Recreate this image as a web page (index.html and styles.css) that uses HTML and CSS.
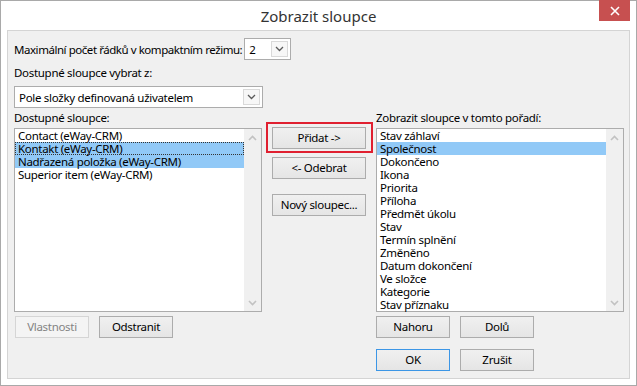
FILE: index.html
```html
<!DOCTYPE html>
<html lang="cs">
<head>
<meta charset="utf-8">
<title>Zobrazit sloupce</title>
<link rel="stylesheet" href="styles.css">
</head>
<body>
<div class="window">
  <div class="titlebar">
    <span class="title-spacer"></span>
    <div class="title">Zobrazit sloupce</div>
    <div class="close" aria-label="Zavřít">
      <svg width="10" height="10" viewBox="0 0 10 10"><path d="M1 1 L9 9 M9 1 L1 9" stroke="#fff" stroke-width="1.6" fill="none"/></svg>
    </div>
  </div>
  <div class="client">
    <div class="row-max">
      <span class="label label-max">Maximální počet řádků v kompaktním režimu:</span>
      <div class="combo combo-small">
        <span class="combo-value">2</span>
        <span class="combo-btn"><svg width="9" height="6" viewBox="0 0 9 6"><path d="M1 1 L4.5 4.5 L8 1" stroke="#5a5a5a" stroke-width="1.3" fill="none"/></svg></span>
      </div>
    </div>
    <div class="label label-source">Dostupné sloupce vybrat z:</div>
    <div class="combo combo-wide">
      <span class="combo-value">Pole složky definovaná uživatelem</span>
      <span class="combo-btn"><svg width="9" height="6" viewBox="0 0 9 6"><path d="M1 1 L4.5 4.5 L8 1" stroke="#5a5a5a" stroke-width="1.3" fill="none"/></svg></span>
    </div>
    <div class="columns">
      <div class="col col-left">
        <div class="label col-label">Dostupné sloupce:</div>
        <div class="listbox">
          <ul class="items">
            <li>Contact (eWay-CRM)</li>
            <li class="selected focused">Kontakt (eWay-CRM)</li>
            <li class="selected">Nadřazená položka (eWay-CRM)</li>
            <li>Superior item (eWay-CRM)</li>
          </ul>
          <div class="scrollbar">
            <svg width="9" height="6" viewBox="0 0 9 6"><path d="M1 5 L4.5 1.5 L8 5" stroke="#c2c2c2" stroke-width="1.6" fill="none"/></svg>
            <svg width="9" height="6" viewBox="0 0 9 6"><path d="M1 1 L4.5 4.5 L8 1" stroke="#c2c2c2" stroke-width="1.6" fill="none"/></svg>
          </div>
        </div>
        <div class="btn-row">
          <button class="btn" disabled>Vlastnosti</button>
          <button class="btn">Odstranit</button>
        </div>
      </div>
      <div class="col col-mid">
        <div class="mark-frame"><button class="btn btn-wide">Přidat -&gt;</button></div>
        <button class="btn btn-wide btn-remove">&lt;- Odebrat</button>
        <button class="btn btn-wide btn-new">Nový sloupec...</button>
      </div>
      <div class="col col-right">
        <div class="label col-label">Zobrazit sloupce v tomto pořadí:</div>
        <div class="listbox">
          <ul class="items">
            <li>Stav záhlaví</li>
            <li class="selected">Společnost</li>
            <li>Dokončeno</li>
            <li>Ikona</li>
            <li>Priorita</li>
            <li>Příloha</li>
            <li>Předmět úkolu</li>
            <li>Stav</li>
            <li>Termín splnění</li>
            <li>Změněno</li>
            <li>Datum dokončení</li>
            <li>Ve složce</li>
            <li>Kategorie</li>
            <li>Stav příznaku</li>
          </ul>
          <div class="scrollbar">
            <svg width="9" height="6" viewBox="0 0 9 6"><path d="M1 5 L4.5 1.5 L8 5" stroke="#c2c2c2" stroke-width="1.6" fill="none"/></svg>
            <svg width="9" height="6" viewBox="0 0 9 6"><path d="M1 1 L4.5 4.5 L8 1" stroke="#c2c2c2" stroke-width="1.6" fill="none"/></svg>
          </div>
        </div>
        <div class="btn-row">
          <button class="btn">Nahoru</button>
          <button class="btn">Dolů</button>
        </div>
        <div class="btn-row btn-row-ok">
          <button class="btn btn-default">OK</button>
          <button class="btn">Zrušit</button>
        </div>
      </div>
    </div>
  </div>
</div>
</body>
</html>
```

FILE: styles.css
```css
* {
  box-sizing: border-box;
}

html, body {
  margin: 0;
  padding: 0;
  background: #fff;
}

body {
  font-family: "Noto Sans", "Open Sans", sans-serif;
  font-size: 11.5px;
  letter-spacing: -0.3px;
  color: #000;
}

.window {
  width: 637px;
  height: 386px;
  border: 1px solid #a9a9a9;
  background: #fff;
  display: flex;
  flex-direction: column;
}

.titlebar {
  height: 29px;
  display: grid;
  grid-template-columns: 1fr auto 1fr;
  align-items: start;
}

.title {
  font-size: 15px;
  letter-spacing: 0;
  line-height: 29px;
  color: #333;
  padding-top: 1px;
}

.close {
  justify-self: end;
  margin-right: 6px;
  margin-top: -1px;
  width: 31px;
  height: 21px;
  background: #c75050;
  display: flex;
  align-items: center;
  justify-content: center;
}

.client {
  flex: 1;
  margin: 0 6px 6px 6px;
  border: 1px solid #d4d4d4;
  background: #f0f0f0;
  padding: 7px 6px 0 6px;
  display: flex;
  flex-direction: column;
}

.label {
  line-height: 15px;
  white-space: nowrap;
}

.label-max {
  letter-spacing: -0.45px;
}

.row-max {
  display: flex;
  align-items: center;
  gap: 2px;
}

.combo {
  height: 22px;
  background: #fff;
  border: 1px solid #acacac;
  display: flex;
  align-items: center;
  justify-content: space-between;
  padding: 0 2px 0 4px;
}

.combo-small {
  width: 47px;
}

.combo-wide {
  width: 249px;
  margin-top: 6px;
}

.combo-value {
  line-height: 15px;
}

.combo-btn {
  width: 17px;
  height: 16px;
  border: 1px solid #d9d9d9;
  background: #f7f7f7;
  display: flex;
  align-items: center;
  justify-content: center;
}

.label-source {
  margin-top: 5px;
}

.columns {
  display: grid;
  grid-template-columns: 248px 107px 247px;
  column-gap: 4px;
}

.col-right {
  margin-left: -1px;
}

.col {
  display: flex;
  flex-direction: column;
  align-items: flex-start;
}

.col-label {
  margin-top: 2px;
}

.listbox {
  margin-top: 3px;
  width: 100%;
  height: 184px;
  border: 1px solid #acacac;
  background: #fff;
  display: flex;
}

.items {
  list-style: none;
  margin: 0;
  padding: 0;
  flex: 1;
  line-height: 13px;
}

.items li {
  height: 13px;
  padding-left: 3px;
  white-space: nowrap;
}

.items li.selected {
  background: #91c9f7;
}

.items li.focused {
  outline: 1px dotted #333;
  outline-offset: -1px;
}

.scrollbar {
  width: 17px;
  background: #f0f0f0;
  display: flex;
  flex-direction: column;
  align-items: center;
  justify-content: space-between;
  padding: 6px 0 5px 0;
}

.btn {
  font-family: inherit;
  font-size: 11.5px;
  letter-spacing: -0.3px;
  color: #000;
  height: 22px;
  width: 74px;
  border: 1px solid #acacac;
  background: linear-gradient(#f0f0f0, #e5e5e5);
  padding: 0;
  line-height: 18px;
}

.btn:disabled {
  color: #838383;
  border-color: #d5d5d5;
  background: #f4f4f4;
}

.btn-default {
  border-color: #3c96e6;
}

.btn-row {
  display: flex;
  gap: 10px;
  margin-top: 4px;
  padding-left: 1px;
}

.col-right .btn-row {
  padding-left: 0;
}

.btn-row-ok {
  margin-top: 11px;
}

.mark-frame {
  margin-top: 14px;
  width: 107px;
  border: 2px solid #e02030;
  padding: 3px 5px 2px 4px;
}

.btn-wide {
  width: 94px;
}

.btn-remove {
  margin-top: 4px;
  margin-left: 6px;
}

.btn-new {
  margin-top: 15px;
  margin-left: 6px;
}
```
